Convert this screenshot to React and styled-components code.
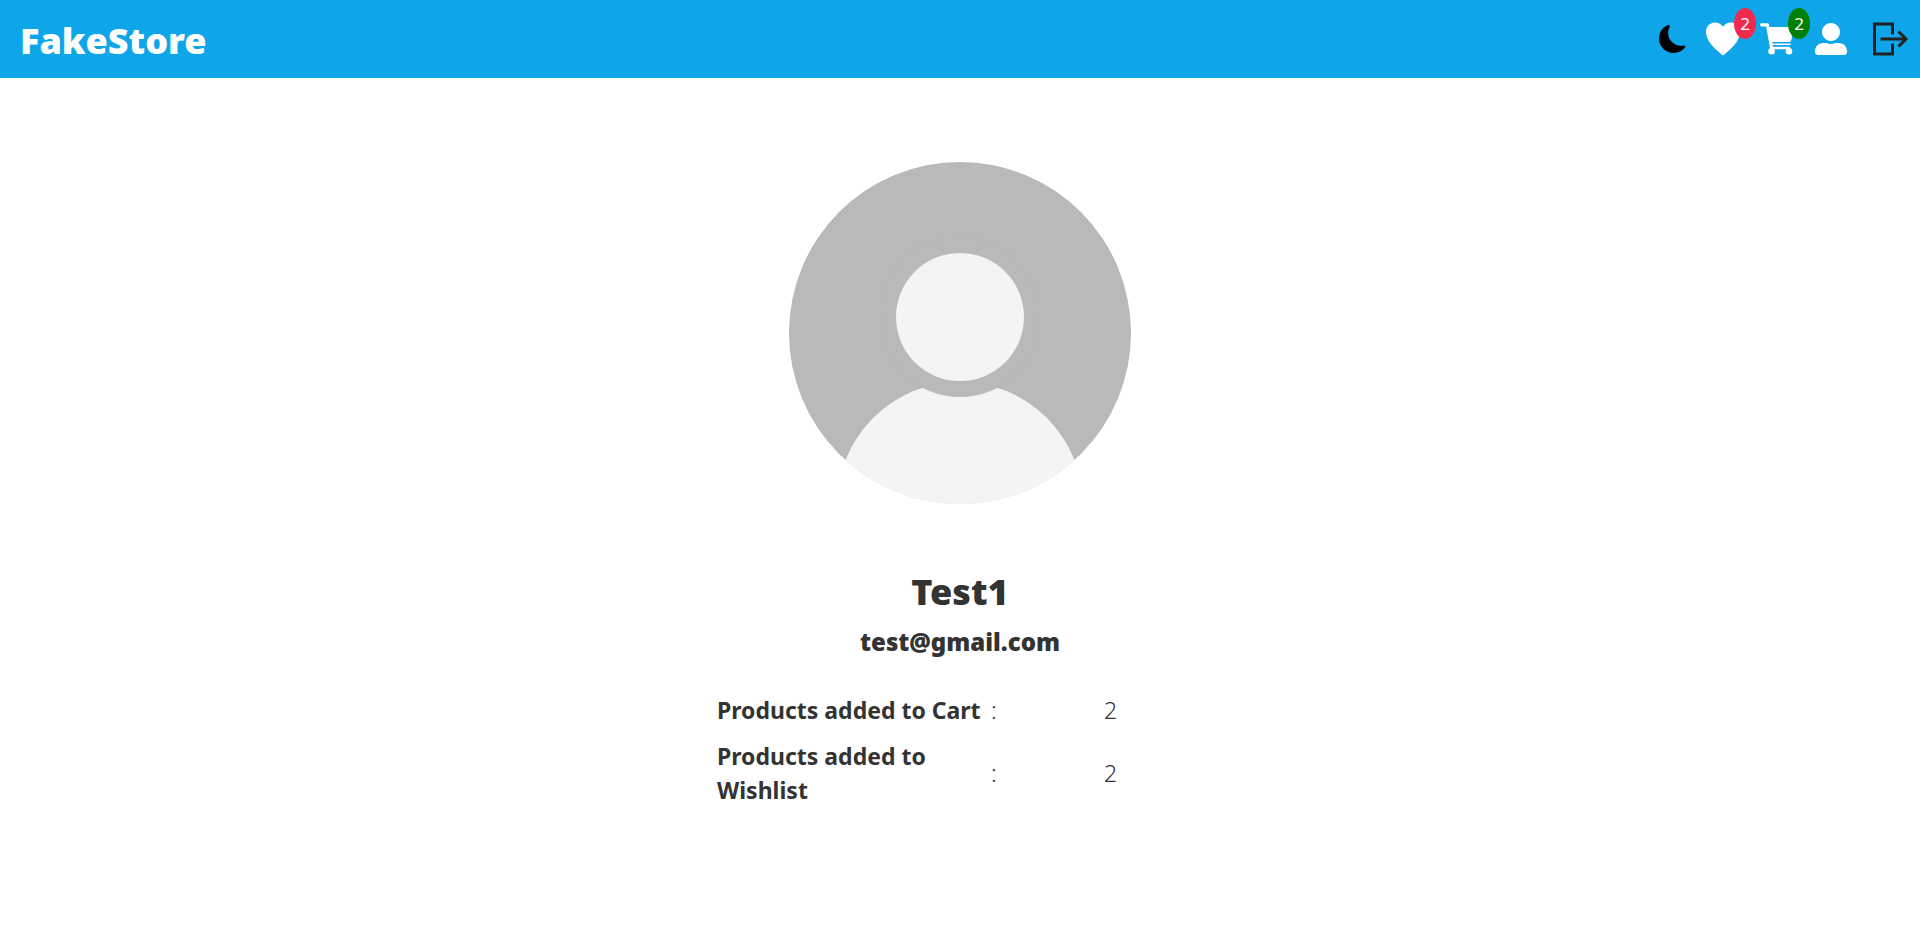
import React from "react";
import styled, { createGlobalStyle } from "styled-components";
import { BsMoonFill } from "react-icons/bs";
import { IoIosHeart } from "react-icons/io";
import { FaUserAlt } from "react-icons/fa";
import { GrLogout } from "react-icons/gr";

const GlobalStyle = createGlobalStyle`
  *, *::before, *::after { box-sizing: border-box; }
  body {
    margin: 0;
    background: #fff;
    color: #333;
    font-family: "Noto Sans", "Open Sans", sans-serif;
  }
`;

const Header = styled.header`
  display: flex;
  align-items: center;
  justify-content: space-between;
  padding: 0 11px 0 20px;
  background: #0fa5e9;
`;

const Brand = styled.a`
  padding: 14px 0 10px;
  color: #fff;
  font-size: 36px;
  font-weight: 900;
  line-height: 54px;
  text-decoration: none;
`;

const Actions = styled.nav`
  display: flex;
  align-items: center;
  gap: 18px;
`;

const IconButton = styled.button`
  position: relative;
  display: flex;
  align-items: center;
  justify-content: center;
  width: ${(p) => p.$width || "36px"};
  height: 36px;
  padding: 0;
  border: 0;
  background: none;
  color: ${(p) => p.$color || "#fff"};
  font-family: inherit;
  cursor: pointer;

  svg { display: block; flex: none; }
`;

const LogoutButton = styled(IconButton)`
  margin-left: 6px;
`;

const Badge = styled.span`
  position: absolute;
  top: -13px;
  right: -15px;
  width: 22px;
  height: 31px;
  border-radius: 50%;
  background: ${(p) => p.$color};
  color: #fff;
  font-size: 17px;
  line-height: 31px;
  text-align: center;
`;

const Profile = styled.main`
  display: flex;
  flex-direction: column;
  align-items: center;
  padding: 84px 16px 48px;
`;

const Avatar = styled.svg`
  display: block;
  width: 342px;
  height: 342px;
  margin-bottom: 64px;
`;

const Name = styled.h1`
  margin: 0 0 8px;
  font-size: 36px;
  font-weight: 900;
  line-height: 48px;
`;

const Email = styled.h2`
  margin: 0 0 27px;
  font-size: 24px;
  font-weight: 900;
  line-height: 36px;
`;

const Stats = styled.table`
  width: 486px;
  max-width: 100%;
  border-collapse: collapse;
  table-layout: fixed;
  font-size: 23px;
  line-height: 34px;
`;

const Label = styled.th`
  width: 274px;
  padding: 6px 0;
  font-weight: 700;
  text-align: left;
`;

const Cell = styled.td`
  width: ${(p) => p.$width};
  padding: 6px 0;
  font-weight: ${(p) => p.$weight || 400};
`;

function CartIcon() {
  return (
    <svg width="36" height="32" viewBox="0 0 36 32" fill="none" stroke="currentColor" strokeLinecap="round" aria-hidden="true">
      <path d="M2.6 1.8H8.4L13 27" strokeWidth="3.2" strokeLinejoin="round" />
      <path d="M9 4H34L32.5 16.5Q32 19 29.5 19H12Z" fill="currentColor" stroke="none" />
      <path d="M12 21.3H31" strokeWidth="1.6" />
      <path d="M12 25H30" strokeWidth="2.4" />
      <circle cx="12.6" cy="28.2" r="3.3" fill="currentColor" stroke="none" />
      <circle cx="30" cy="28.2" r="3.3" fill="currentColor" stroke="none" />
    </svg>
  );
}

function ProfileAvatar() {
  return (
    <Avatar viewBox="0 0 342 342" role="img" aria-label="Profile picture">
      <defs>
        <clipPath id="disc"><circle cx="171" cy="171" r="171" /></clipPath>
      </defs>
      <g clipPath="url(#disc)">
        <rect width="342" height="342" fill="#b9b9b9" />
        <circle cx="171" cy="343" r="123" fill="#f4f4f4" />
        <circle cx="171" cy="155" r="80" fill="#b9b9b9" />
        <circle cx="171" cy="155" r="64" fill="#f4f4f4" />
        <path d="M56 298L171 240L286 298L342 342H0Z" fill="#f4f4f4" />
      </g>
    </Avatar>
  );
}

const stats = [
  { label: "Products added to Cart", value: 2 },
  { label: "Products added to Wishlist", value: 2 },
];

export default function App() {
  return (
    <>
      <GlobalStyle />
      <Header>
        <Brand href="#">FakeStore</Brand>
        <Actions aria-label="Account">
          <IconButton type="button" aria-label="Dark mode" $color="#000" $width="28px"><BsMoonFill size={28} /></IconButton>
          <IconButton type="button" aria-label="Wishlist">
            <IoIosHeart size={42} />
            <Badge $color="#f22a4d">2</Badge>
          </IconButton>
          <IconButton type="button" aria-label="Cart">
            <CartIcon />
            <Badge $color="#008000">2</Badge>
          </IconButton>
          <IconButton type="button" aria-label="Profile"><FaUserAlt size={32} /></IconButton>
          <LogoutButton type="button" aria-label="Log out" $color="#222"><GrLogout size={36} /></LogoutButton>
        </Actions>
      </Header>
      <Profile>
        <ProfileAvatar />
        <Name>Test1</Name>
        <Email>test@gmail.com</Email>
        <Stats>
          <tbody>
            {stats.map((s) => (
              <tr key={s.label}>
                <Label scope="row">{s.label}</Label>
                <Cell $width="113px" $weight={300}>:</Cell>
                <Cell $weight={300}>{s.value}</Cell>
              </tr>
            ))}
          </tbody>
        </Stats>
      </Profile>
    </>
  );
}
